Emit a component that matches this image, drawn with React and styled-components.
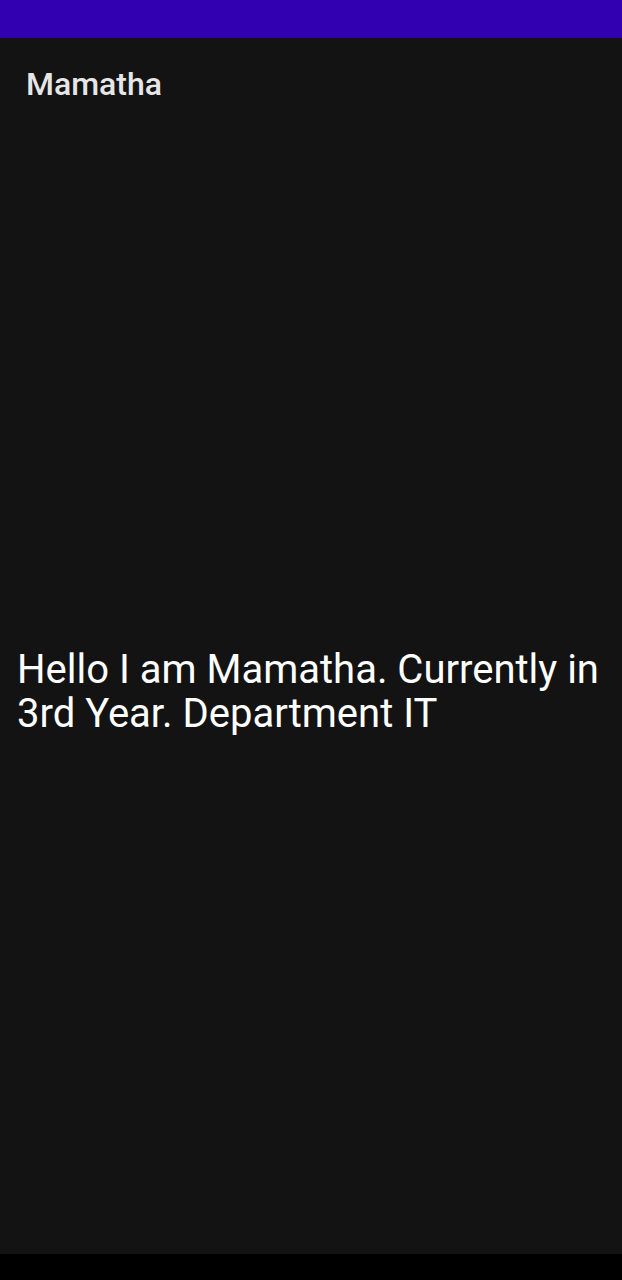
import React from 'react';
import styled, {createGlobalStyle} from 'styled-components';

const GlobalStyle = createGlobalStyle`
    html, body {
        margin: 0;
        padding: 0;
        background: #131313;
    }
    #root {
        height: 1280px;
    }
`;

const Screen = styled.div`
    display: flex;
    flex-direction: column;
    height: 1280px;
    background: #131313;
    font-family: Roboto, "Noto Sans", sans-serif;
`;

const StatusBar = styled.div`
    height: 38px;
    background: #3300b1;
    flex-shrink: 0;
`;

const Toolbar = styled.div`
    height: 92px;
    display: flex;
    align-items: center;
    padding-left: 26px;
    flex-shrink: 0;
    
    & h1 {
        margin: 0;
        font-size: 32px;
        font-weight: 500;
        color: #e6e6e6;
    }
`;

const Content = styled.main`
    flex: 1;
    display: flex;
    align-items: center;
    padding: 0 17px;
    
    & p {
        margin: 0;
        font-size: 40px;
        line-height: 44px;
        color: #ffffff;
    }
`;

const NavBar = styled.div`
    height: 26px;
    background: #000;
    flex-shrink: 0;
`;

export default function App() {
    return (
        <>
            <GlobalStyle/>
            <Screen>
                <StatusBar/>
                <Toolbar>
                    <h1>Mamatha</h1>
                </Toolbar>
                <Content>
                    <p>Hello I am Mamatha. Currently in 3rd Year. Department IT</p>
                </Content>
                <NavBar/>
            </Screen>
        </>
    );
}
